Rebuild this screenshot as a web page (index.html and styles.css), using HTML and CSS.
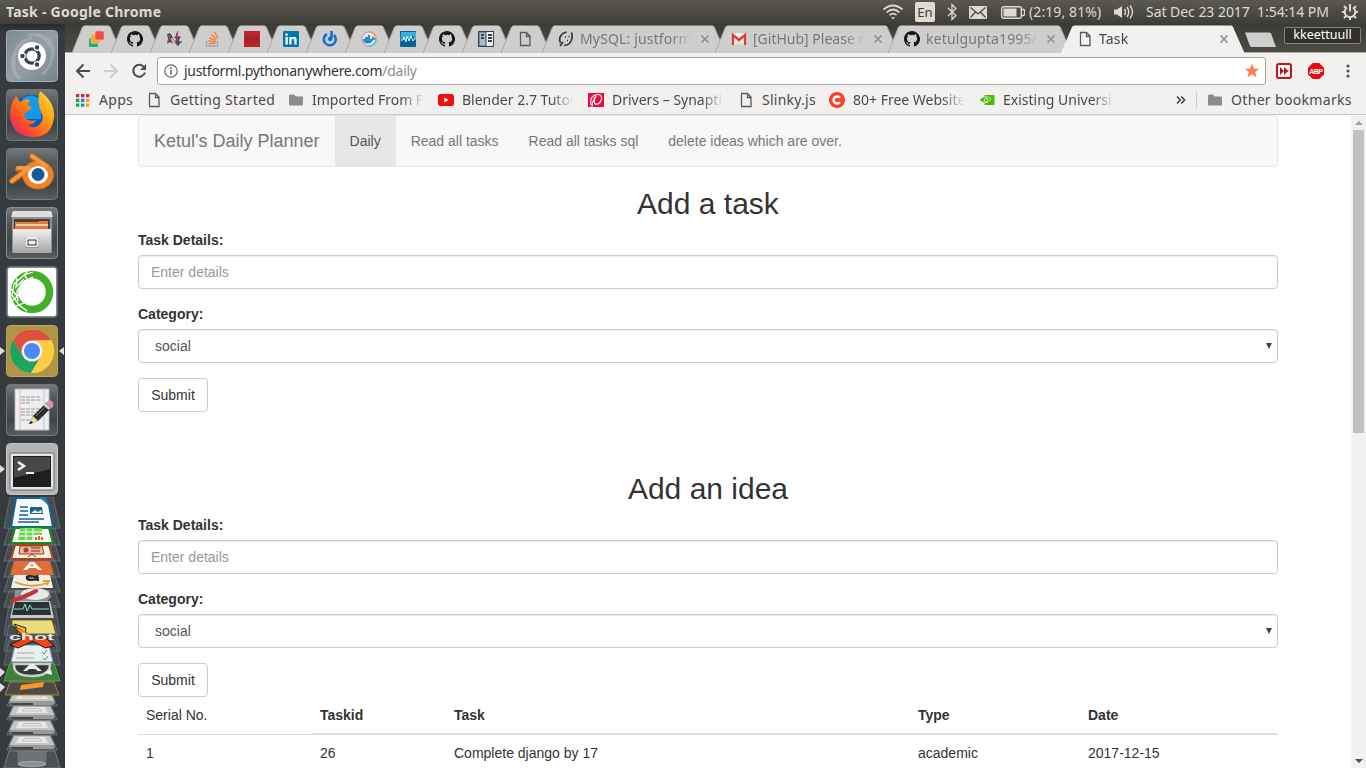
FILE: index.html
```html
<!DOCTYPE html>
<html lang="en">
<head>
<meta charset="utf-8">
<title>Task</title>
<link rel="stylesheet" href="styles.css">
</head>
<body>
<svg class="defs" width="0" height="0">
  <defs>
    <linearGradient id="tile" x1="0" y1="0" x2="0" y2="1"><stop offset="0" stop-color="#74787a"/><stop offset=".25" stop-color="#565b5d"/><stop offset=".7" stop-color="#3f4446"/><stop offset="1" stop-color="#585d5f"/></linearGradient>
    <linearGradient id="silver" x1="0" y1="0" x2="0" y2="1"><stop offset="0" stop-color="#f2f2f2"/><stop offset="1" stop-color="#a5a5a5"/></linearGradient>
    <linearGradient id="ubu" x1="0" y1="0" x2="1" y2="1"><stop offset="0" stop-color="#7d8b93"/><stop offset=".5" stop-color="#94a0a6"/><stop offset="1" stop-color="#75838b"/></linearGradient>
    <linearGradient id="fire" x1="1" y1="0" x2="0" y2="1"><stop offset="0" stop-color="#ffe83a"/><stop offset=".4" stop-color="#ff980e"/><stop offset=".7" stop-color="#ff4b2b"/><stop offset="1" stop-color="#e31587"/></linearGradient>
    <symbol id="doc" viewBox="0 0 16 16"><path d="M3.500 1.500h6l3.500 3.500v9.500h-9.500zM9.500 1.500v4h3.500" fill="none" stroke="#5a5a5a" stroke-width="1.300"/></symbol>
    <symbol id="folder" viewBox="0 0 16 16"><path d="M1 3.500q0-1 1-1h4l2 2h6q1 0 1 1v7q0 1-1 1H2q-1 0-1-1z" fill="#8c8c8c"/></symbol>
    <symbol id="github" viewBox="0 0 16 16"><path fill="#181616" d="M8 0C3.580 0 0 3.580 0 8c0 3.540 2.290 6.530 5.470 7.590.4.070.55-.17.55-.38 0-.19-.01-.82-.01-1.490-2.010.37-2.530-.49-2.690-.94-.09-.23-.48-.94-.82-1.130-.28-.15-.68-.52-.01-.53.63-.01 1.080.58 1.230.82.72 1.210 1.870.87 2.330.66.07-.52.28-.87.51-1.070-1.780-.2-3.640-.89-3.640-3.950 0-.87.31-1.590.82-2.150-.08-.2-.36-1.020.08-2.120 0 0 .67-.21 2.200.82a7.600 7.600 0 0 1 4 0c1.530-1.040 2.200-.82 2.200-.82.44 1.100.16 1.920.08 2.120.51.56.82 1.270.82 2.150 0 3.070-1.870 3.750-3.650 3.950.29.25.54.73.54 1.480 0 1.070-.01 1.930-.01 2.200 0 .21.15.46.55.38A8 8 0 0 0 8 0z"/></symbol>
    <symbol id="close" viewBox="0 0 10 10"><path d="M1.500 1.500l7 7M8.500 1.500l-7 7" stroke="#8f8f8f" stroke-width="1.700"/></symbol>
    <symbol id="pin" viewBox="0 0 50 28"><path d="M0 28L10.500 2Q11.200 .5 13 .5H36Q37.500 .5 38 2L49.500 28z" fill="#d0cecd"/><path d="M38 1.500L49.500 28M10.500 2L0 28" fill="none" stroke="#aaa8a6"/></symbol>
    <symbol id="wide" viewBox="0 0 184 28"><path d="M0 28L10.500 2Q11.200 .5 13 .5H170Q171.500 .5 172 2L183.500 28z" fill="#d0cecd"/><path d="M172 1.500L183.500 28M10.500 2L0 28" fill="none" stroke="#aaa8a6"/></symbol>
    <symbol id="drive" viewBox="0 0 54 16"><path d="M8 0H46L52 15H2z" fill="#62686a" fill-opacity=".4" stroke="#777d7f" stroke-width=".7"/><path d="M9 .5H45L49.500 10H4.500z" fill="#c4c4c4"/><path d="M14 2H40L43 8H11z" fill="#e6e6e6"/><path d="M19 3.500H35L37 6H17z" fill="none" stroke="#bbb" stroke-width=".8"/><path d="M4.500 10H49.500V13Q49 14 47 14H7Q5 14 4.500 13z" fill="#999"/><path d="M5 12H28V14H7z" fill="#444"/></symbol>
  </defs>
</svg>

<header class="panel">
  <span class="panel-title">Task - Google Chrome</span>
  <div class="indicators">
    <svg class="i-wifi" width="22" height="18" viewBox="0 0 22 18" fill="none" stroke="#dfdbd2" stroke-width="1.700"><path d="M1.500 6.500Q11-1.500 20.500 6.500M4.500 9.500Q11 3.500 17.500 9.500M7.500 12.200Q11 9 14.500 12.200"/><path d="M9 14.200h4L11 16.500z" fill="#dfdbd2" stroke="none"/></svg>
    <span class="lang">En</span>
    <svg class="i-bt" width="12" height="18" viewBox="0 0 12 18" fill="none" stroke="#dfdbd2" stroke-width="1.300"><path d="M2 5l8 7.500-4 4v-15l4 4L2 13"/></svg>
    <svg class="i-mail" width="18" height="13" viewBox="0 0 18 13"><rect width="18" height="13" rx="1" fill="#dfdbd2"/><path d="M1.500 1.500L9 8l7.500-6.500M1.500 11.500L6.500 6M16.500 11.500L11.500 6" fill="none" stroke="#4a4943" stroke-width="1.300"/></svg>
    <svg class="i-bat" width="24" height="13" viewBox="0 0 24 13"><rect x=".7" y=".7" width="19.600" height="11.600" rx="2" fill="none" stroke="#dfdbd2" stroke-width="1.400"/><rect x="2.500" y="2.500" width="13" height="8" fill="#dfdbd2"/><path d="M21 3.500h1.500q1 0 1 1v4q0 1-1 1H21" fill="none" stroke="#dfdbd2" stroke-width="1.300"/></svg>
    <span class="bat-text">(2:19, 81%)</span>
    <svg class="i-snd" width="22" height="16" viewBox="0 0 22 16"><path d="M1 5.500h3L9 2v12L4 10.500H1z" fill="#dfdbd2"/><path d="M11.500 5Q13.500 8 11.500 11M14 3Q17.500 8 14 13M17 1.500Q22 8 17 14.500" fill="none" stroke="#dfdbd2" stroke-width="1.400"/></svg>
    <span class="clock">Sat Dec 23 2017&nbsp; 1:54:14 PM</span>
    <svg class="i-gear" width="18" height="18" viewBox="0 0 18 18" fill="none" stroke="#dfdbd2"><path d="M6 4.500A5.300 5.300 0 1 0 12 4.500" stroke-width="2"/><path d="M9 1v7.500" stroke-width="2"/><path d="M1 9h2.500M14.500 9H17M3 3l2 2M15 3l-2 2M3 15l2-2M15 15l-2-2M9 14.500V17" stroke-width="2"/></svg>
  </div>
</header>

<div class="desktop">
<nav class="launcher">
  <svg class="tile" viewBox="0 0 52 52"><rect x=".5" y=".5" width="51" height="51" rx="4" fill="url(#ubu)" stroke="#a5afb4"/><g fill="none" stroke="#b5bec3" stroke-opacity=".45" stroke-width="3"><path d="M9 40Q4 14 26 8M42 8Q54 28 36 45M14 49Q3 40 8 24M22 5Q38 2 44 16"/></g><circle cx="26" cy="26" r="14" fill="#fff"/><circle cx="26" cy="26" r="7.200" fill="none" stroke="#3b4347" stroke-width="3.200"/><g fill="#3b4347" stroke="#fff" stroke-width="1.200"><circle cx="16.500" cy="26" r="2.800"/><circle cx="31" cy="17.500" r="2.800"/><circle cx="31" cy="34.500" r="2.800"/></g></svg>
  <svg class="tile" viewBox="0 0 52 52"><rect x=".5" y=".5" width="51" height="51" rx="4" fill="url(#tile)" stroke="#747879"/><circle cx="25" cy="25" r="19" fill="#005bc4"/><path d="M17 9Q26 3 35 11V30H17z" fill="#1499e8"/><path d="M34 2Q49 13 48 28Q46 48 27 48Q5 47 4 26Q4 15 10 7L14 13Q19 9 24 11L21 16L26 18Q24 22 20 23Q17 25 19 29Q23 33 30 31Q28 37 21 35Q27 41 33 36Q38 31 36 25Q30 12 34 2z" fill="url(#fire)"/></svg>
  <svg class="tile" viewBox="0 0 52 52"><rect x=".5" y=".5" width="51" height="51" rx="4" fill="url(#tile)" stroke="#747879"/><path d="M6 33L22 21H12M26 8L39 18" stroke="#bc6319" stroke-width="6" stroke-linecap="round" stroke-linejoin="round" fill="none"/><ellipse cx="32" cy="27" rx="15.500" ry="14" fill="#f58220" stroke="#d77220"/><path d="M6 33L23 20H12M26 8L40 18" stroke="#f49a42" stroke-width="4" stroke-linecap="round" stroke-linejoin="round" fill="none"/><ellipse cx="32" cy="27" rx="10" ry="9" fill="#fff"/><circle cx="32" cy="26.500" r="6.500" fill="#165a92"/></svg>
  <svg class="tile" viewBox="0 0 52 52"><rect x=".5" y=".5" width="51" height="51" rx="4" fill="url(#tile)" stroke="#8a8e90"/><path d="M6 5H46V46H6z" fill="#929292"/><path d="M7 4H45L47 10H5z" fill="#dedede"/><path d="M8 12H44V22H8z" fill="#4b4037"/><path d="M9 15H33V14H42V22H9z" fill="#e47c35"/><path d="M10 18H42" stroke="#f6e6d0" stroke-width="1.500"/><path d="M7 22H45V46H7z" fill="url(#silver)"/><rect x="19" y="30" width="14" height="11" rx="2" fill="#999"/><rect x="20.500" y="31" width="11" height="8" rx="1" fill="#fff" stroke="#eee" stroke-width="2"/><rect x="22" y="33" width="8" height="5" fill="#eee" stroke="#333"/></svg>
  <svg class="tile" viewBox="0 0 52 52"><rect x=".5" y=".5" width="51" height="51" rx="4" fill="#878b8d" stroke="#686c6e"/><rect x="2" y="2" width="48" height="48" rx="2" fill="#fff"/><circle cx="26" cy="26" r="17.500" fill="none" stroke="#43b02a" stroke-width="7.500"/><path d="M27 6L18 9 8 18 6 29 13 39 21 45M27 11L17 16 11 25 12 35M22 5L18 9 22 14M11 12L10 21 18 13M5 23L12 31M6 35L14 28M10 40L18 37" fill="none" stroke="#fff" stroke-width="1.300"/></svg>
  <div class="tile-row">
    <svg class="tile" viewBox="0 0 52 52"><rect x=".5" y=".5" width="51" height="51" rx="4" fill="#af9346" stroke="#b8a45f"/><g><circle cx="26" cy="26" r="22" fill="#ffd24d"/><path d="M7 15A22 22 0 0 1 45.200 15.500H26A10.500 10.500 0 0 0 16.900 31.200z" fill="#dd5144"/><path d="M7 15L17 31.500A10.500 10.500 0 0 0 35 31.500L25 48A22 22 0 0 1 7 15z" fill="#1da462"/><path d="M45.200 15.500A22 22 0 0 1 25 48L35 31.200A10.500 10.500 0 0 0 26 15.500z" fill="#ffcd46"/><circle cx="26" cy="26" r="10.300" fill="#f2f2f2"/><circle cx="26" cy="26" r="8" fill="#4c8bf5"/></g></svg>
    <i class="mark mark-l"></i><i class="mark mark-r"></i>
  </div>
  <svg class="tile" viewBox="0 0 52 52"><rect x=".5" y=".5" width="51" height="51" rx="4" fill="url(#tile)" stroke="#747879"/><path d="M9 5H43V46H9z" fill="#eee" stroke="#bbb"/><path d="M14 5V46" stroke="#e7b5b5"/><path d="M38 5V46" stroke="#b5c6e7"/><path d="M15 13H35M15 16H36M15 19H24M15 25H34M15 28H35M15 31H28M15 36H24" stroke="#999" stroke-width="1.200" stroke-dasharray="4 1"/><path d="M23 40L27 32 41 18 46 23 32 37z" fill="#2b2b2b"/><path d="M30 32L42 20" stroke="#888"/><path d="M23 40L27 32 32 37z" fill="#e4dc89"/><path d="M23 40l2-3 2 2z" fill="#111"/><path d="M39 20L43 16Q49 17 47 23L44 25z" fill="#de8bb5"/><path d="M38 20l5 5" stroke="#ddd" stroke-width="2"/></svg>
  <div class="tile-row">
    <svg class="tile" viewBox="0 0 52 52"><rect x=".5" y=".5" width="51" height="51" rx="4" fill="#b4b4b4" stroke="#c5c5c5"/><rect x="4" y="10" width="44" height="37" rx="1" fill="#e6e6e6" stroke="#6b6b6b"/><path d="M7 13H45V44H7z" fill="#1e1e1e"/><path d="M8 14H44V26L8 35z" fill="#484848"/><path d="M12 19L18 23 12 27" fill="none" stroke="#eee" stroke-width="2.500"/><path d="M20 30h8" stroke="#eee" stroke-width="2"/></svg>
    <i class="mark mark-l"></i>
  </div>
  <svg class="stack" viewBox="0 0 65 271">
    <g fill="#62696b" fill-opacity=".4" stroke="#747a7c" stroke-width=".7"><path d="M10 0H53L60 31H4zM9 31H55L60 48H4zM9 47H55L60 64H4zM9 63H55L60 80H4zM9 79H55L60 95H4zM9 94H55L60 110H4zM9 108H55L60 138H4zM9 128H55L60 154H4zM9 143H55L60 168H4z"/></g>
    <path d="M16 1H43L49 8L53 30H11z" fill="#f8fafb" stroke="#146292" stroke-width="2"/><path d="M38 0H45L49 8z" fill="#1980b9"/><path d="M20 10H28M20 14H28M19 18H28M19 22H44M18 25H39" stroke="#166294" stroke-width="1.500"/><path d="M30 10H42L43 17H30z" fill="#17648c"/><path d="M31 16l4-3 3 2 3-2 1 3z" fill="#eee"/>
    <path d="M15 31H49L53 46H11z" fill="#fff" stroke="#168a18" stroke-width="2"/><path d="M20 31H42V43H18z" fill="#70d64f"/><path d="M18 35H42M18 39H42M26 31V43M33 31V43" stroke="#fff"/><path d="M34 38H44V44H33z" fill="#fff"/><path d="M35 43V40h2v3zM38 43v-4h2v4zM41 43v-3h2v3z" fill="#e65b26"/>
    <path d="M15 48H49L53 62H11z" fill="#f6eee9" stroke="#a44823" stroke-width="2"/><path d="M20 49H42L44 57H19z" fill="#eab69b" stroke="#a5401c"/><path d="M28 60L32 57 36 60M31 51h9M31 54h9" stroke="#833116" fill="none"/><circle cx="26" cy="53" r="2.500" fill="#a84520"/>
    <path d="M14 64H50L54 78H10z" fill="#e26c39"/><path d="M23 73L30 65H34L42 73H38L36 71H29L27 73zM30 69H34L32 67z" fill="#fff"/>
    <path d="M14 78H50L53 91H11z" fill="#eee"/><path d="M37 78L38 84M37 80Q26 78 27 81T37 82" fill="none" stroke="#222" stroke-width="2.500"/><path d="M15 85Q32 92 47 86M43 84h6l-2 4" fill="none" stroke="#f29a1f" stroke-width="1.800"/>
    <path d="M15 93H49L51 100L46 105H14z" fill="#8b8f8f"/><ellipse cx="35" cy="97" rx="14" ry="6" fill="#e8e8e8"/><path d="M12 104Q24 100 36 94" stroke="#c6343b" stroke-width="4" stroke-linecap="round"/>
    <path d="M14 104H50L54 121H10z" fill="#c8c8c8"/><path d="M15 105H49L51 118H12z" fill="#293231"/><path d="M14 112H23L25 107 27 114 30 108 32 112H49" fill="none" stroke="#8cddc5"/><path d="M12 104Q24 101 36 94" fill="none" stroke="#c6343b" stroke-width="3.500" stroke-linecap="round"/>
    <path d="M12 123H52L56 137H26Q22 133 12 128z" fill="#e9dc7d" stroke="#5a4d20" stroke-width=".8"/><path d="M14 127Q19 132 17 137L28 138Q24 134 26 131z" fill="#f1c637" stroke="#222"/>
    <path d="M15 148L49 148L53 165H11z" fill="#e9eeee" stroke="#6690c4"/><path d="M17 156H34M16 161H34" stroke="#aaa"/><path d="M42 155l2 2 3-4M43 161l2 2 3-4" stroke="#49a141" fill="none"/>
    <path d="M15 131L20 132 33 141 46 141L54 149L45 151L33 144L18 151L10 148L24 141z" fill="#f24517" stroke="#28180c"/><path d="M15 131L20 132 30 138H24z" fill="#ff9a1f"/><text x="9" y="143" font-family="Liberation Sans" font-weight="bold" font-size="9" textLength="45" lengthAdjust="spacingAndGlyphs" fill="#e7e7e7">chot</text>
    <path d="M10 166H54L60 184H4z" fill="#3e7f3b" stroke="#619c58"/><path d="M14 167Q13 179 32 179Q50 179 50 167z" fill="#343936" stroke="#ccc" stroke-width="2.500"/><path d="M45 176l6-4 1 6z" fill="#eee"/><path d="M23 174L30 167H34L42 174H38L35 172H29L27 174z" fill="#eee"/>
    <use href="#drive" x="5" y="238" width="54" height="16"/><use href="#drive" x="5" y="223" width="54" height="16"/><use href="#drive" x="5" y="208" width="54" height="16"/><use href="#drive" x="5" y="194" width="54" height="16"/>
    <path d="M10 185H54L59 198H5z" fill="#494b4a" stroke="#ba7a32"/><path d="M21 188L44 185 43 190 20 193z" fill="#ff9822"/>
    <path d="M9 254H55L60 271H4z" fill="#62696b" fill-opacity=".5" stroke="#747a7c"/><path d="M17 254H47L46 267H18z" fill="#858a8b" fill-opacity=".6"/><ellipse cx="32" cy="267" rx="14" ry="2.500" fill="#8b9092" stroke="#a8adaf"/>
    <path d="M0 171L5 175 0 180zM0 186L5 190 0 195z" fill="#ddd"/>
  </svg>
</nav>

<section class="browser">
  <div class="tabs">
    <div class="tab"><svg class="shape"><use href="#pin"/></svg><svg class="fav" viewBox="0 0 16 16"><rect x="1" y="7" width="9" height="9" rx="1.500" fill="#0eb573"/><rect x="3" y="3.500" width="9" height="9" rx="1.500" fill="#fbab18" stroke="#d0cecd" stroke-width=".6"/><rect x="7" y="0" width="9" height="9" rx="1.500" fill="#f44a3f" stroke="#d0cecd" stroke-width=".6"/></svg></div>
    <div class="tab"><svg class="shape"><use href="#pin"/></svg><svg class="fav"><use href="#github"/></svg></div>
    <div class="tab"><svg class="shape"><use href="#pin"/></svg><svg class="fav" viewBox="0 0 16 16"><path d="M1 3l3-1 2 3-1 3 2 5-3-2-3 2 1-5zM10 1l2 4 3 1-2 3 1 4-2 2-3-3 1-4-2-2 2-1z" fill="#5a4a65"/><path d="M2 4l2 3-2 3M12 0l-1 5 1 5M7 8l2 3" stroke="#ba426b" fill="none"/><path d="M5 6l2 1M12 11h4" stroke="#2e2b31"/></svg></div>
    <div class="tab"><svg class="shape"><use href="#pin"/></svg><svg class="fav" viewBox="0 0 16 16" fill="none"><path d="M1.500 10v5h11v-5" stroke="#a5a7a9" stroke-width="1.500"/><path d="M3.500 12.500h7M3.500 9.800l7 1.200M4.200 6.800l6.700 2.500M6 3.500l5.500 4.500M9.500 1l3.300 6" stroke="#f18134" stroke-width="1.400"/></svg></div>
    <div class="tab"><svg class="shape"><use href="#pin"/></svg><svg class="fav" viewBox="0 0 16 16"><rect width="16" height="16" fill="#b9242d"/><path d="M2 6h3v2H2v2h3M7 7h3M7 9h3M12 10V6l2 4" stroke="#8a2028" fill="none"/></svg></div>
    <div class="tab"><svg class="shape"><use href="#pin"/></svg><svg class="fav" viewBox="0 0 16 16"><rect width="16" height="16" rx="1" fill="#0077b5"/><path d="M2.500 6h2.300v7.500H2.500zM6.300 6h2.200v1Q9.200 5.800 11 5.800q2.600 0 2.600 3.200v4.500h-2.300V9.500q0-1.700-1.300-1.700T8.600 9.500v4H6.300z" fill="#fff"/><circle cx="3.600" cy="3.600" r="1.400" fill="#fff"/></svg></div>
    <div class="tab"><svg class="shape"><use href="#pin"/></svg><svg class="fav" viewBox="0 0 16 16" fill="none" stroke="#116fd1"><path d="M5 3A6 6 0 1 0 12 4" stroke-width="2.600"/><path d="M9.500 0L9.500 7" stroke-width="2.600"/><path d="M6 7Q6 10 8.500 10Q11 9 9.500 4" fill="#116fd1"/></svg></div>
    <div class="tab"><svg class="shape"><use href="#pin"/></svg><svg class="fav" viewBox="0 0 16 16"><circle cx="8" cy="8" r="7.200" fill="#e4e5e8" stroke="#de76bb"/><path d="M8 .8A7.200 7.200 0 0 1 15 8" fill="none" stroke="#f29c39" stroke-width="1.300"/><path d="M15 8A7.200 7.200 0 0 1 8 15.200" fill="none" stroke="#35cbc7" stroke-width="1.300"/><path d="M2 8H11Q11 6 12 5L13 7L15 7Q14 9 12 9Q10 13 6 12.500Q2 12 2 8zM4 6h5v2H4zM7 4h2v2H7z" fill="#238cc9"/></svg></div>
    <div class="tab"><svg class="shape"><use href="#pin"/></svg><svg class="fav" viewBox="0 0 16 16"><rect width="16" height="16" rx="1" fill="#096096"/><path d="M0 16V9L3 7 5 10 7 4 9 10 12 4 16 9V1H1z" fill="#38afd5"/><path d="M1 9h2l1-3 2 5 1-6 2 5 2-5 2 5 2-3" stroke="#d8f7ff" fill="none"/></svg></div>
    <div class="tab"><svg class="shape"><use href="#pin"/></svg><svg class="fav"><use href="#github"/></svg></div>
    <div class="tab"><svg class="shape"><use href="#pin"/></svg><svg class="fav" viewBox="0 0 16 16"><rect x=".7" y=".7" width="14.600" height="14.600" fill="#adbdc8" stroke="#304654" stroke-width="1.400"/><path d="M8 1h7v14H8z" fill="#eff2f3"/><path d="M8 1v14" stroke="#304654"/><path d="M3 4h3M3 7h3M10 4h4M10 7h4M10 10h4" stroke="#304654" stroke-width="1.800"/></svg></div>
    <div class="tab"><svg class="shape"><use href="#pin"/></svg><svg class="fav"><use href="#doc"/></svg></div>
    <div class="tab wide first-wide"><svg class="shape"><use href="#wide"/></svg><svg class="fav" viewBox="0 0 16 16" fill="none" stroke="#333"><path d="M8.500 1Q4 2 2 6Q1 9 2.500 12M6 14.500Q13 14 14 7Q14.500 4 13.500 1.500M2 15L5 11" stroke-width="1.700"/><path d="M7 6h1M10.500 5.500h1M9 9.500h1" stroke-width="1.500"/></svg><span class="tab-title t-mysql">MySQL: justform</span><svg class="x"><use href="#close"/></svg></div>
    <div class="tab wide"><svg class="shape"><use href="#wide"/></svg><svg class="fav" viewBox="0 0 16 16"><path d="M1 2.500h14v11.500H1z" fill="#f3f3f3"/><path d="M3 14L8 9l5 5z" fill="#ddd"/><path d="M2 14V4L8 9 14 4V14" fill="none" stroke="#dd3b31" stroke-width="2.300"/></svg><span class="tab-title t-gmail">[GitHub] Please r</span><svg class="x"><use href="#close"/></svg></div>
    <div class="tab wide"><svg class="shape"><use href="#wide"/></svg><svg class="fav"><use href="#github"/></svg><span class="tab-title t-ketul">ketulgupta1995/</span><svg class="x"><use href="#close"/></svg></div>
    <div class="tab wide active"><svg class="shape" viewBox="0 0 184 28"><path d="M0 28L11 2Q11.500 .5 13.500 .5H170Q171.500 .5 172 2L183.500 28z" fill="#f2f1f0"/></svg><svg class="fav"><use href="#doc"/></svg><span class="tab-title t-task">Task</span><svg class="x"><use href="#close"/></svg></div>
    <svg class="newtab" width="34" height="16" viewBox="0 0 34 16"><path d="M2 .5H26Q27.500 .5 28 1.500L33 15H9Q7.500 15 7 14z" fill="#d0cecd"/></svg>
    <span class="profile">kkeettuull</span>
  </div>

  <div class="toolbar">
    <svg width="16" height="16" viewBox="0 0 16 16" fill="none" stroke="#4d4d4d" stroke-width="2"><path d="M15 8H2.500M8.500 1.500L2 8l6.500 6.500"/></svg>
    <svg width="16" height="16" viewBox="0 0 16 16" fill="none" stroke="#cdcccb" stroke-width="2"><path d="M1 8h12.500M7.500 1.500L14 8l-6.500 6.500"/></svg>
    <svg width="16" height="16" viewBox="0 0 16 16" fill="none"><path d="M13 4A6 6 0 1 0 14 9.500" stroke="#4d4d4d" stroke-width="2"/><path d="M15 1v6H9z" fill="#4d4d4d"/></svg>
    <div class="omnibox">
      <svg width="14" height="14" viewBox="0 0 14 14" fill="none" stroke="#666"><circle cx="7" cy="7" r="6.200" stroke-width="1.200"/><path d="M7 6v4.500M7 3.300v1.600" stroke-width="1.600"/></svg>
      <span class="url">justforml.pythonanywhere.com<em>/daily</em></span>
      <svg class="star" width="16" height="16" viewBox="0 0 16 16"><path d="M8 .8l2 5h5.200l-4.100 3.300 1.500 5.300L8 11.300l-4.600 3.100 1.500-5.300L.8 5.800H6z" fill="#fd7e4c"/></svg>
    </div>
    <svg class="ext" width="16" height="16" viewBox="0 0 16 16"><rect x="1" y="1" width="14" height="14" rx="2" fill="#fff" stroke="#c90f17" stroke-width="2"/><path d="M4 4l4 4-4 4zM8 4l4.500 4L8 12z" fill="#b9141b"/></svg>
    <svg class="ext" width="16" height="16" viewBox="0 0 16 16"><path d="M4.700 0h6.600L16 4.700v6.600L11.300 16H4.700L0 11.300V4.700z" fill="#e40c0c"/><text x="1.300" y="10.600" font-family="Liberation Sans" font-size="7" font-weight="bold" textLength="13.500" fill="#fff">ABP</text></svg>
    <svg class="dots" width="4" height="14" viewBox="0 0 4 14" fill="#555"><circle cx="2" cy="2" r="1.600"/><circle cx="2" cy="7" r="1.600"/><circle cx="2" cy="12" r="1.600"/></svg>
  </div>

  <div class="bookmarks">
    <div class="bm"><svg viewBox="0 0 16 16"><path d="M1 2h3.300v3.300H1z M6 2h3.300v3.300H6z M11 2h3.300v3.300H11z" fill="#e5202a"/><path d="M1 6.700h3.300V10H1z" fill="#16a05d"/><path d="M6 6.700h3.300V10H6z" fill="#1a73e8"/><path d="M11 6.700h3.300V10H11z" fill="#fb9e18"/><path d="M1 11.500h3.300v3.300H1zM6 11.500h3.300v3.300H6z" fill="#16a05d"/><path d="M11 11.500h3.300v3.300H11z" fill="#fb9e18"/></svg><span class="b-apps">Apps</span></div>
    <div class="bm"><svg><use href="#doc"/></svg><span class="b-start">Getting Started</span></div>
    <div class="bm"><svg><use href="#folder"/></svg><span class="fade b-imp">Imported From F</span></div>
    <div class="bm"><svg viewBox="0 0 16 16"><rect y="2" width="16" height="12" rx="2.500" fill="#ee1010"/><path d="M6.300 5.500L10.500 8l-4.200 2.500z" fill="#fff"/></svg><span class="fade b-blend">Blender 2.7 Tutor</span></div>
    <div class="bm"><svg viewBox="0 0 16 16"><rect y="1" width="16" height="14" fill="#ed0b43"/><path d="M3 13Q1 4 9 2.500Q14 2 13.500 7Q12 13 7 12Q5 9 8 4Q4 9 4 15" fill="none" stroke="#fff" stroke-width="1.100"/></svg><span class="fade b-drv">Drivers – Synapti</span></div>
    <div class="bm"><svg><use href="#doc"/></svg><span class="b-slinky">Slinky.js</span></div>
    <div class="bm"><svg viewBox="0 0 16 16"><circle cx="8" cy="8" r="8" fill="#fa4027"/><path d="M11 5.700A3.600 3.600 0 1 0 11 10.300" fill="none" stroke="#fff" stroke-width="2.500"/></svg><span class="fade b-free">80+ Free Website</span></div>
    <div class="bm"><svg viewBox="0 0 16 16"><path d="M5.500 3H15.500v10H5.500z" fill="#4fb80b"/><path d="M.5 8Q5 2 12 6.500Q9 12 5 10.500Q2 10 .5 8z" fill="#4fb80b" stroke="#dff2d2" stroke-width=".8"/><circle cx="7" cy="8" r="1.800" fill="#4fb80b" stroke="#fff" stroke-width=".8"/></svg><span class="fade b-exist">Existing Universi</span></div>
    <svg class="more" width="10" height="10" viewBox="0 0 10 10" fill="none" stroke="#444" stroke-width="1.600"><path d="M1 1.500L4.300 5 1 8.500M5.300 1.500L8.600 5 5.300 8.500"/></svg>
    <i class="sep"></i>
    <div class="bm"><svg><use href="#folder"/></svg><span class="b-other">Other bookmarks</span></div>
  </div>

  <div class="viewport">
    <main class="page">
      <nav class="navbar"><a class="brand">Ketul's Daily Planner</a><a class="link current">Daily</a><a class="link">Read all tasks</a><a class="link">Read all tasks sql</a><a class="link">delete ideas which are over.</a></nav>
      <form class="entry">
        <h2>Add a task</h2>
        <label>Task Details:</label>
        <div class="control placeholder">Enter details</div>
        <label>Category:</label>
        <div class="control select">social<i class="arrow"></i></div>
        <button type="button">Submit</button>
      </form>
      <form class="entry">
        <h2>Add an idea</h2>
        <label>Task Details:</label>
        <div class="control placeholder">Enter details</div>
        <label>Category:</label>
        <div class="control select">social<i class="arrow"></i></div>
        <button type="button">Submit</button>
      </form>
      <div class="table">
        <div class="row head"><span>Serial No.</span><b>Taskid</b><b>Task</b><b>Type</b><b>Date</b></div>
        <div class="row"><span>1</span><span>26</span><span>Complete django by 17</span><span>academic</span><span>2017-12-15</span></div>
      </div>
    </main>
    <aside class="scrollbar"><i class="up"></i><i class="thumb"></i><i class="down"></i></aside>
  </div>
</section>
</div>
</body>
</html>
```

FILE: styles.css
```css
* { box-sizing: border-box; }
html, body { height: 100%; overflow: hidden; }
body { margin: 0; display: flex; flex-direction: column; background: #fff; font: 14px/20px "Liberation Sans", Arial, sans-serif; color: #333; }
svg { display: block; flex: none; }
.defs { position: absolute; }

.panel, .tabs, .toolbar, .bookmarks { font-family: "Noto Sans", sans-serif; white-space: nowrap; }

.panel { height: 24px; flex: none; display: flex; align-items: center; justify-content: space-between; padding: 0 7px 0 6px; background: linear-gradient(#5b594f, #3e3d38); color: #dfdbd2; }
.panel-title { font-weight: bold; font-size: 14px; letter-spacing: .25px; }
.indicators { display: flex; align-items: center; }
.lang { width: 20px; height: 20px; margin: 0 11px; background: #dfdbd2; border-radius: 2px; color: #3c3b37; text-align: center; font-size: 13px; line-height: 20px; }
.i-bt { margin-right: 11px; }
.i-mail { margin-right: 14px; }
.i-bat { margin-right: 4px; }
.bat-text { width: 72px; margin-right: 12px; letter-spacing: .1px; }
.i-snd { margin-right: 11px; }
.clock { width: 183px; margin-right: 12px; letter-spacing: -.04px; }

.desktop { flex: 1; display: flex; min-height: 0; }
.launcher { width: 65px; flex: none; display: flex; flex-direction: column; align-items: center; gap: 7px; padding: 6px 1px 0 0; background: #353b3e; background-image: linear-gradient(#272b2d, #353b3e 8px); overflow: hidden; }
.tile { width: 52px; height: 52px; }
.tile-row { width: 64px; display: flex; justify-content: center; position: relative; flex: none; }
.mark { position: absolute; top: 22px; border: 4px solid transparent; }
.mark-l { left: 0; border-left: 5px solid #ddd; border-right: 0; }
.mark-r { right: 0; border-right: 5px solid #ddd; border-left: 0; }
.stack { width: 65px; height: 271px; margin-top: -5px; margin-left: 1px; }

.browser { flex: 1; min-width: 0; display: flex; flex-direction: column; }
.tabs { height: 29px; flex: none; display: flex; padding: 1px 0 0 7px; background: linear-gradient(#3c3b37, #4b4a43); position: relative; border-bottom: 1px solid #b0aeac; }
.tab { width: 39px; height: 28px; flex: none; display: flex; align-items: center; position: relative; padding-left: 16px; z-index: 3; }
.tab.active { z-index: 9; }
.shape { position: absolute; left: 0; top: 0; width: 50px; height: 28px; }
.wide { width: 173px; }
.wide .shape { width: 184px; }
.first-wide { margin-left: 2px; }
.fav { width: 16px; height: 16px; position: relative; }
.tab-title { position: relative; margin-left: 6px; width: 112px; overflow: hidden; color: #777; -webkit-mask-image: linear-gradient(90deg, #000 82%, transparent); mask-image: linear-gradient(90deg, #000 82%, transparent); }
.t-mysql, .t-ketul, .t-task { letter-spacing: .15px; }
.x { width: 10px; height: 10px; margin-left: 8px; position: relative; }
.active { width: 184px; }
.active .tab-title { color: #444; }
.newtab { margin: 7px 0 0 -2px; }
.profile { margin: 2px 0 0 7px; width: 77px; height: 17px; border: 1px solid #85837b; border-radius: 2px; background: #31302c; color: #fff; text-align: center; font-size: 12.5px; line-height: 14px; }

.toolbar { height: 34px; flex: none; display: flex; align-items: center; background: #f2f1f0; padding: 1px 16px 0 10px; gap: 12px; }
.omnibox { width: 1109px; height: 28px; margin-left: -2px; border: 1px solid #a9a8a6; border-radius: 3px; background: #fff; display: flex; align-items: center; padding: 0 5px 0 6px; }
.url { margin-left: 6px; font-size: 14px; letter-spacing: -.29px; color: #333; }
.url em { font-style: normal; color: #8c8c8c; }
.star { margin-left: auto; }
.ext { margin-left: -2px; margin-right: 6px; }
.dots { margin-left: 4px; }

.bookmarks { height: 28px; flex: none; display: flex; align-items: center; gap: 14px; padding: 0 14px 1px 10px; background: #f2f1f0; border-bottom: 1px solid #c9c7c5; color: #4a4a4a; }
.bm { display: flex; align-items: center; gap: 8px; }
.bm svg { width: 16px; height: 16px; }
.bm span { width: 112px; flex: none; }
.bm .fade { overflow: hidden; -webkit-mask-image: linear-gradient(90deg, #000 80%, transparent); mask-image: linear-gradient(90deg, #000 80%, transparent); }
.bm .b-apps { width: 33px; letter-spacing: .3px; }
.bm .b-start { width: 104px; letter-spacing: .3px; }
.bm .b-slinky { width: 53px; letter-spacing: .25px; }
.bm .b-other { width: 121px; letter-spacing: .33px; }
.more { margin-left: auto; }
.sep { width: 1px; height: 16px; background: #cfcdcb; margin: 0 -4px; }

.viewport { flex: 1; min-height: 0; display: flex; }
.page { flex: 1; padding: 0 73px; overflow: hidden; }
.navbar { height: 52px; border: 1px solid #e7e7e7; border-radius: 4px; background: #f8f8f8; display: flex; margin-bottom: 20px; color: #777; line-height: 20px; }
.brand { font-size: 18px; padding: 15px; }
.link { padding: 15px; }
.current { background: #e7e7e7; color: #555; }
.entry { margin: 0 0 60px; }
.entry + .entry { margin-bottom: 0; }
h2 { margin: 0 0 10px; font-size: 30px; line-height: 33px; font-weight: normal; text-align: center; }
label { display: block; font-weight: bold; margin-bottom: 5px; }
.control { height: 34px; border: 1px solid #ccc; border-radius: 4px; padding: 6px 12px; margin-bottom: 15px; box-shadow: inset 0 1px 1px rgba(0,0,0,.075); color: #555; }
.placeholder { color: #999; }
.select { padding: 6px 5px 6px 16px; display: flex; justify-content: space-between; }
.arrow { width: 0; height: 0; margin-top: 7px; border: 3px solid transparent; border-top: 6px solid #444; border-bottom: 0; }
button { display: block; height: 34px; width: 70px; padding: 0; border: 1px solid #ccc; border-radius: 4px; background: #fff; font: inherit; color: #333; }
.row { display: grid; grid-template-columns: 174px 134px 464px 170px 198px; }
.row > * { padding: 8px; }
.head > * { border-bottom: 2px solid #ddd; }
.head > span { border-bottom-width: 1px; padding-bottom: 9px; }

.scrollbar { width: 15px; background: #f1f1f1; display: flex; flex-direction: column; align-items: center; }
.up, .down { border: 4px solid transparent; }
.up { border-top: 0; border-bottom: 4px solid #a0a0a0; margin: 6px 0 5px; }
.thumb { width: 11px; height: 303px; background: #c1c1c1; }
.down { border-bottom: 0; border-top: 4px solid #505050; margin: auto 0 5px; }
```
